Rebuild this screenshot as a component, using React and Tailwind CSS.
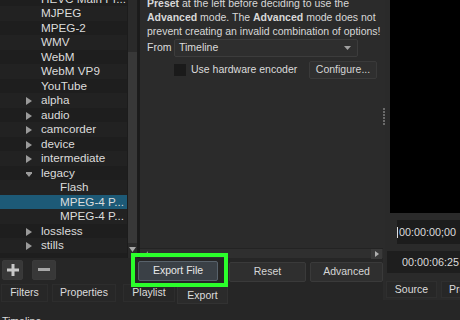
import React from 'react';

const rows = [
    { label: 'HEVC Main Pr...', level: 1 },
    { label: 'MJPEG', level: 1 },
    { label: 'MPEG-2', level: 1 },
    { label: 'WMV', level: 1 },
    { label: 'WebM', level: 1 },
    { label: 'WebM VP9', level: 1 },
    { label: 'YouTube', level: 1 },
    { label: 'alpha', level: 1, arrow: 'right' },
    { label: 'audio', level: 1, arrow: 'right' },
    { label: 'camcorder', level: 1, arrow: 'right' },
    { label: 'device', level: 1, arrow: 'right' },
    { label: 'intermediate', level: 1, arrow: 'right' },
    { label: 'legacy', level: 1, arrow: 'down' },
    { label: 'Flash', level: 2 },
    { label: 'MPEG-4 P...', level: 2, selected: true },
    { label: 'MPEG-4 P...', level: 2 },
    { label: 'lossless', level: 1, arrow: 'right' },
    { label: 'stills', level: 1, arrow: 'right' },
    { label: '', level: 1 },
];

const Arrow = ({ dir }) => (
    <svg width="6" height="8" viewBox="0 0 6 8" className="absolute left-[26px] top-[4px]">
        {dir === 'right' ? (
            <path d="M0 0 L6 4 L0 8 Z" fill="#9a9a9a" />
        ) : (
            <path d="M-1 2 L7 2 L3 7 Z" fill="#9a9a9a" />
        )}
    </svg>
);

const Btn = ({ children, className = '' }) => (
    <div
        className={`flex items-center justify-center rounded-[2px] border border-[#3a3a3a] bg-[#2f2f2f] text-[10.5px] text-[#d6d6d6] ${className}`}
    >
        {children}
    </div>
);

const App = () => {
    return (
        <div className="relative h-[320px] w-[460px] overflow-hidden bg-[#262626] font-['Liberation_Sans',Arial,sans-serif] text-[#dcdcdc]">
            <div className="flex h-[300px]">
                {/* export dock */}
                <div className="flex w-[385px] flex-col">
                    <div className="flex h-[258px]">
                        {/* preset tree */}
                        <div className="h-[258px] w-[127px] overflow-hidden bg-[#1f1f1f]">
                            <div className="mt-[-8.5px]">
                                {rows.map((r, i) => (
                                    <div
                                        key={i}
                                        className={`relative h-[14.5px] whitespace-nowrap text-[11.7px] leading-[14.5px] ${r.selected
                                                ? 'bg-[#1d5a77]'
                                                : i % 2 === 0
                                                    ? 'bg-[#1e1e1e]'
                                                    : 'bg-[#222222]'
                                            }`}
                                    >
                                        {r.arrow && <Arrow dir={r.arrow} />}
                                        <span className={r.level === 2 ? 'pl-[60px]' : 'pl-[41px]'}>{r.label}</span>
                                    </div>
                                ))}
                            </div>
                        </div>
                        {/* vertical scrollbar */}
                        <div className="flex w-[11px] flex-col border-x border-[#1c1c1c] bg-[#2a2a2a]">
                            <div className="h-[52px]" />
                            <div className="h-[191px] bg-[#383838]" />
                            <div className="flex h-[13px] items-center justify-center">
                                <svg width="7" height="5" viewBox="0 0 7 5">
                                    <path d="M0 0 L7 0 L3.5 5 Z" fill="#a8a8a8" />
                                </svg>
                            </div>
                        </div>
                        <div className="w-[2px] bg-[#1b1b1b]" />
                        {/* settings */}
                        <div className="flex flex-1 flex-col bg-[#2b2b2b]">
                            <div className="h-[248px] overflow-hidden pl-[7px]">
                                <div className="mt-[-4px] whitespace-nowrap text-[10.5px] leading-[14px] text-[#d8d8d8]">
                                    <b>Preset</b> at the left before deciding to use the
                                    <br />
                                    <b>Advanced</b> mode. The <b>Advanced</b> mode does not
                                    <br />
                                    prevent creating an invalid combination of options!
                                </div>
                                <div className="mt-[1px] flex h-[18px] items-center">
                                    <span className="w-[27px] text-[10.5px]">From</span>
                                    <div className="relative flex h-[18px] w-[184px] items-center rounded-[2px] border border-[#3c3c3c] bg-[#2e2e2e] pl-[4px] text-[10.5px]">
                                        Timeline
                                        <svg width="7" height="4" viewBox="0 0 7 4" className="absolute right-[6px] top-[6px]">
                                            <path d="M0 0 L7 0 L3.5 4 Z" fill="#a0a0a0" />
                                        </svg>
                                    </div>
                                </div>
                                <div className="mt-[4px] flex h-[18px] items-center">
                                    <div className="ml-[27px] h-[12px] w-[12px] bg-[#1a1a1a]" />
                                    <span className="ml-[5px] w-[118px] whitespace-nowrap text-[10.5px]">Use hardware encoder</span>
                                    <Btn className="h-[18px] w-[68px]">Configure...</Btn>
                                </div>
                            </div>
                            {/* horizontal scrollbar */}
                            <div className="flex h-[10px] items-center border-t border-[#232323] bg-[#2f2f2f]">
                                <div className="flex w-[10px] items-center justify-center">
                                    <svg width="5" height="6" viewBox="0 0 5 6">
                                        <path d="M5 0 L5 6 L0 6 Z" fill="#8a8a8a" />
                                    </svg>
                                </div>
                                <div className="flex-1" />
                                <div className="flex h-[10px] w-[11px] items-center justify-center bg-[#3a3a3a]">
                                    <svg width="4" height="6" viewBox="0 0 4 6">
                                        <path d="M0 0 L4 3 L0 6 Z" fill="#b0b0b0" />
                                    </svg>
                                </div>
                                <div className="w-[1px]" />
                            </div>
                        </div>
                    </div>
                    {/* button row */}
                    <div className="flex h-[24px]">
                        <Btn className="ml-[2px] mt-[2px] h-[20px] w-[21px] bg-[#383838]">
                            <svg width="12" height="12" viewBox="0 0 12 12">
                                <path d="M4.5 0 H7.5 V4.5 H12 V7.5 H7.5 V12 H4.5 V7.5 H0 V4.5 H4.5 Z" fill="#c8c8c8" />
                            </svg>
                        </Btn>
                        <Btn className="ml-[9px] mt-[2px] h-[20px] w-[24px] bg-[#383838]">
                            <svg width="12" height="4" viewBox="0 0 12 4">
                                <rect width="12" height="3" fill="#a8a8a8" />
                            </svg>
                        </Btn>
                        <Btn className="ml-[82px] mt-[3px] h-[20px] w-[80px] border-[#58626b] bg-[#3a4046] text-[#e8e8e8]">
                            Export File
                        </Btn>
                        <Btn className="ml-[11px] mt-[4px] h-[20px] w-[77px]">Reset</Btn>
                        <Btn className="ml-[4px] mt-[4px] h-[20px] w-[73px]">Advanced</Btn>
                    </div>
                    {/* dock tabs */}
                    <div className="flex h-[18px] items-start text-[10.5px]">
                        <div className="ml-[1px] mt-[2px] flex h-[18px] w-[47px] items-center justify-center border border-[#2d2d2d] bg-[#272727]">Filters</div>
                        <div className="ml-[4px] mt-[2px] flex h-[18px] w-[64px] items-center justify-center border border-[#2d2d2d] bg-[#272727]">Properties</div>
                        <div className="ml-[7px] mt-[2px] flex h-[18px] w-[52px] items-center justify-center border border-[#2d2d2d] bg-[#272727]">Playlist</div>
                        <div className="ml-[2px] mt-[4px] flex h-[18px] w-[51px] items-center justify-center border border-[#323232] bg-[#2b2b2b] pt-[2px]">Export</div>
                    </div>
                </div>
                {/* splitter */}
                <div className="flex w-[6px] flex-col items-center bg-[#2b2b2b] pt-[108px]">
                    {[0, 1, 2, 3, 4, 5].map((d) => (
                        <div key={d} className="mb-[1.5px] h-[1.5px] w-[2px] bg-[#6a6a6a]" />
                    ))}
                </div>
                {/* player dock */}
                <div className="flex flex-1 flex-col bg-[#2a2a2a]">
                    <div className="ml-[5px] h-[213px] bg-black" />
                    <div className="ml-[12px] mt-[7px] flex h-[24px] items-center bg-[#1c1c1c] whitespace-nowrap text-[10.8px]">
                        <span className="mr-[1px] h-[11px] w-[1px] bg-[#e0e0e0]" />
                        00:00:00;00
                    </div>
                    <div className="ml-[2px] mt-[7px] flex h-[22px] items-center bg-[#1e1e1e] pl-[15px] whitespace-nowrap text-[10.8px]">
                        00:00:06:25
                    </div>
                    <div className="mt-[8px] flex text-[10.5px]">
                        <div className="ml-[1px] flex h-[17px] w-[51px] items-center justify-center border border-[#2f2f2f] bg-[#272727]">Source</div>
                        <div className="ml-[4px] flex h-[17px] w-[60px] items-center border border-[#2f2f2f] bg-[#272727] pl-[7px]">Project</div>
                    </div>
                </div>
            </div>
            {/* timeline title */}
            <div className="pl-[2px] pt-[15px] text-[10.5px] leading-[12px]">Timeline</div>
            {/* highlight frame */}
            <div className="absolute left-[131px] top-[253px] h-[34px] w-[97px] border-[4px] border-[#2bff2b]" />
        </div>
    );
};

export default App;
